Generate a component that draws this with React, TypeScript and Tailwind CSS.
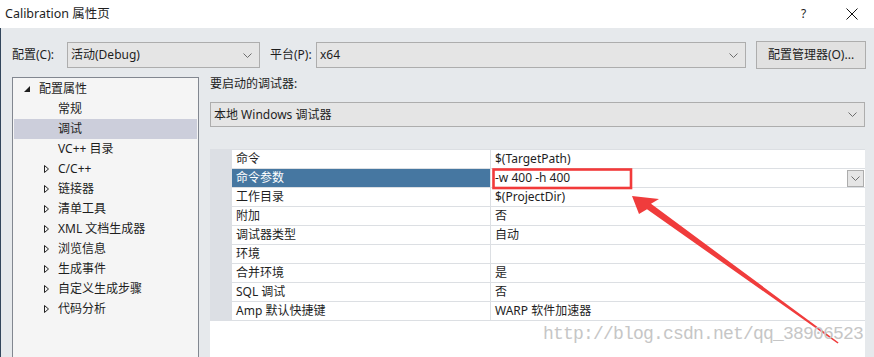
import React from "react";

const Chevron = () => (
  <svg width="9" height="5" viewBox="0 0 9 5" className="shrink-0">
    <path d="M0.5 0.5 L4.5 4.5 L8.5 0.5" stroke="#6d6d6d" strokeWidth="1" fill="none" />
  </svg>
);

const Combo = ({ text, className }: { text: string; className: string }) => (
  <div className={`flex items-center justify-between bg-[#e5e5e5] border border-[#adadad] pl-[3px] pr-[7px] ${className}`}>
    <span>{text}</span>
    <Chevron />
  </div>
);

const Hollow = () => (
  <svg width="5" height="8" viewBox="0 0 5 8">
    <path d="M0.5 0.5 L4.5 4 L0.5 7.5 Z" stroke="#222" strokeWidth="1" fill="none" />
  </svg>
);

const tree = ["常规", "调试", "VC++ 目录", "C/C++", "链接器", "清单工具", "XML 文档生成器", "浏览信息", "生成事件", "自定义生成步骤", "代码分析"];
const expandable = new Set(["C/C++", "链接器", "清单工具", "XML 文档生成器", "浏览信息", "生成事件", "自定义生成步骤", "代码分析"]);

const props: [string, string][] = [
  ["命令", "$(TargetPath)"],
  ["命令参数", "-w 400 -h 400"],
  ["工作目录", "$(ProjectDir)"],
  ["附加", "否"],
  ["调试器类型", "自动"],
  ["环境", ""],
  ["合并环境", "是"],
  ["SQL 调试", "否"],
  ["Amp 默认快捷键", "WARP 软件加速器"],
];

export default function App() {
  return (
    <div className="relative w-[874px] h-[357px] overflow-hidden flex flex-col text-[12px] text-[#1e1e1e] font-['Noto_Sans','Noto_Sans_CJK_SC',sans-serif]">
      {/* title bar */}
      <div className="h-[28px] bg-white flex items-center shrink-0">
        <span className="pl-[5px] text-[12.5px]">Calibration 属性页</span>
        <div className="ml-auto flex items-center pr-[16px]">
          <span className="w-[45px]">?</span>
          <svg width="12" height="12" viewBox="0 0 12 12">
            <path d="M0.5 0.5 L11.5 11.5 M11.5 0.5 L0.5 11.5" stroke="#111" strokeWidth="1" />
          </svg>
        </div>
      </div>

      <div className="flex-1 bg-[#e6e9ec] border-l border-[#33465c] flex flex-col">
        {/* config row */}
        <div className="flex items-center h-[28px] mt-[13px] pl-[11px]">
          <span className="w-[55px]">配置(C):</span>
          <Combo text="活动(Debug)" className="w-[193px] h-[26px]" />
          <span className="ml-[10px] w-[46px]">平台(P):</span>
          <Combo text="x64" className="w-[430px] h-[26px]" />
          <div className="ml-[10px] w-[110px] h-[28px] bg-[#e1e1e1] border border-[#adadad] flex items-center justify-center">
            配置管理器(O)...
          </div>
        </div>

        <div className="flex mt-[8px] pl-[11px]">
          {/* tree */}
          <div className="w-[187px] h-[300px] bg-[#f5f5f5] border border-[#828790] p-px shrink-0">
            <div className="flex items-center h-[20px] pl-[10px]">
              <span className="w-[15px]">
                <svg width="6" height="6" viewBox="0 0 6 6">
                  <path d="M6 0 L6 6 L0 6 Z" fill="#1e1e1e" />
                </svg>
              </span>
              <span>配置属性</span>
            </div>
            {tree.map((t) => (
              <div key={t} className={`flex items-center h-[20px] pl-[30px] ${t === "调试" ? "bg-[#cccedb]" : ""}`}>
                <span className="w-[14px] flex items-center">{expandable.has(t) && <Hollow />}</span>
                <span>{t}</span>
              </div>
            ))}
          </div>

          {/* right side */}
          <div className="ml-[11px] w-[655px] flex flex-col">
            <div className="h-[14px] leading-[14px]">要启动的调试器:</div>
            <div className="mt-[11px] h-[25px] flex items-center justify-between bg-[#e5e5e5] border border-[#adadad] pl-[3px] pr-[7px]">
              <span>本地 Windows 调试器</span>
              <Chevron />
            </div>
            <div className="mt-[22px] h-[300px] bg-white flex flex-col">
              <div className="flex">
                <div className="w-[22px] bg-[#dcdfe4] shrink-0" />
                <div className="flex-1 flex flex-col border-t border-[#dcdfe3]">
                  {props.map(([k, v], i) => (
                    <div key={k} className="flex h-[19px] border-b border-[#dcdfe3]">
                      <div className={`w-[259px] border-r border-[#dcdfe3] pl-[4px] flex items-center ${i === 1 ? "bg-[#4677a1] text-white" : ""}`}>
                        {k}
                      </div>
                      <div className="flex-1 pl-[4px] flex items-center justify-between">
                        <span>{v}</span>
                        {i === 1 && (
                          <div className="w-[17px] h-[17px] mr-px bg-[#e5e5e5] border border-[#adadad] flex items-center justify-center">
                            <Chevron />
                          </div>
                        )}
                      </div>
                    </div>
                  ))}
                </div>
              </div>
            </div>
          </div>
        </div>
      </div>

      {/* annotation: red box, arrow and watermark */}
      <svg className="absolute inset-0 pointer-events-none" width="874" height="357" viewBox="0 0 874 357">
        <rect x="493.5" y="169.5" width="137.5" height="18.5" fill="none" stroke="#f23a3a" strokeWidth="2.6" />
        <polygon
          points="632,196 659,199 651,203.7 838.6,342.6 837.6,343.6 647,209.3 639,214"
          fill="#f03c3c"
        />
      </svg>
      <div className="absolute left-[543px] top-[323px] text-[18px] leading-[22px] tracking-[-0.8px] text-[#c6c6c6] font-['Liberation_Mono',monospace] pointer-events-none">
        http://blog.csdn.net/qq_38906523
      </div>
    </div>
  );
}
